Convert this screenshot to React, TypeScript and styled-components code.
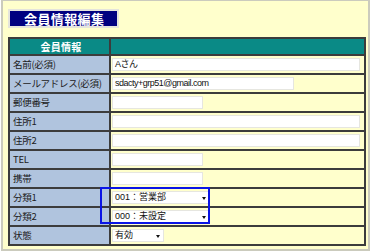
import React from 'react'
import styled, { createGlobalStyle } from 'styled-components'

const GlobalStyle = createGlobalStyle`
   html, body {
      margin: 0;
      padding: 0;
      background: #ffffff;
   }
   body {
      font-family: "Liberation Sans", "Noto Sans CJK JP", sans-serif;
   }
`

const Page = styled.div`
   width: 360px;
   height: 241px;
   margin-left: 1px;
   padding: 7px 0 0 5px;
   border: 2px solid #cbcbbd;
   border-top-width: 1px;
   background-color: #ffffcc;
   box-sizing: content-box;
`

const Title = styled.div`
   display: inline-block;
   height: 15px;
   margin-top: 1px;
   padding: 0 13px 0 14px;
   border: 2px solid #e4e4dc;
   background-color: #000080;
   color: #ffffff;
   font-family: "Noto Sans CJK JP", sans-serif;
   font-size: 13px;
   font-weight: bold;
   line-height: 15px;
   letter-spacing: 0.4px;
`

const TableWrap = styled.div`
   position: relative;
   margin-top: 9px;
   width: 358px;
`

const Table = styled.table`
   width: 358px;
   border-collapse: collapse;
   table-layout: fixed;
   border: 2px solid #3c3c3c;
`

type CellProps = {
   head?: boolean;
}

const Label = styled.td<CellProps>`
   width: 96px;
   height: ${props => props.head ? '15px' : '17px'};
   padding: 0 0 0 3px;
   border: 2px solid #3c3c3c;
   background-color: ${props => props.head ? '#0a8a86' : '#b0c4de'};
   color: ${props => props.head ? '#ffffff' : '#202020'};
   font-family: "Noto Sans CJK JP", sans-serif;
   font-size: ${props => props.head ? '10px' : '9.5px'};
   font-weight: ${props => props.head ? 'bold' : 'normal'};
   text-align: ${props => props.head ? 'center' : 'left'};
   letter-spacing: ${props => props.head ? '0.3px' : '-0.3px'};
   line-height: 1;
   white-space: nowrap;
`

const Value = styled.td<CellProps>`
   padding: 0 0 0 1px;
   border: 2px solid #3c3c3c;
   background-color: ${props => props.head ? '#0a8a86' : '#ffffcc'};
   line-height: 1;
`

const Field = styled.div<{ w: number }>`
   width: ${props => props.w}px;
   height: 13px;
   box-sizing: border-box;
   border: 1px solid #e6e6e0;
   background-color: #ffffff;
   padding: 0 0 0 2px;
   font-size: 9px;
   line-height: 11px;
   letter-spacing: -0.5px;
   color: #111;
   font-family: "Liberation Sans", "Noto Sans CJK JP", sans-serif;
   white-space: nowrap;
   overflow: hidden;
`

const SelectBox = styled(Field)`
   position: relative;
   letter-spacing: 0;
   &::after {
      content: '';
      position: absolute;
      right: 3px;
      top: 5px;
      border-left: 2px solid transparent;
      border-right: 2px solid transparent;
      border-top: 3px solid #111;
   }
`

const Highlight = styled.div`
   position: absolute;
   left: 92px;
   top: 150px;
   width: 106px;
   height: 33px;
   border: 2px solid #0a14e6;
   pointer-events: none;
`

type Row = {
   label: string;
   kind: 'input' | 'select';
   width: number;
   value?: string;
}

const rows: Row[] = [
   { label: '名前(必須)', kind: 'input', width: 248, value: 'Aさん' },
   { label: 'メールアドレス(必須)', kind: 'input', width: 182, value: 'sdacty+grp51@gmail.com' },
   { label: '郵便番号', kind: 'input', width: 91 },
   { label: '住所1', kind: 'input', width: 248 },
   { label: '住所2', kind: 'input', width: 248 },
   { label: 'TEL', kind: 'input', width: 91 },
   { label: '携帯', kind: 'input', width: 91 },
   { label: '分類1', kind: 'select', width: 98, value: '001：営業部' },
   { label: '分類2', kind: 'select', width: 98, value: '000：未設定' },
   { label: '状態', kind: 'select', width: 52, value: '有効' },
]

export default function App() {
   return (
      <>
         <GlobalStyle />
         <Page>
            <Title>会員情報編集</Title>
            <TableWrap>
               <Table>
                  <tbody>
                     <tr>
                        <Label head>会員情報</Label>
                        <Value head />
                     </tr>
                     {rows.map(row => (
                        <tr key={row.label}>
                           <Label>{row.label}</Label>
                           <Value>
                              {row.kind === 'input'
                                 ? <Field w={row.width}>{row.value}</Field>
                                 : <SelectBox w={row.width}>{row.value}</SelectBox>}
                           </Value>
                        </tr>
                     ))}
                  </tbody>
               </Table>
               <Highlight />
            </TableWrap>
         </Page>
      </>
   )
}
